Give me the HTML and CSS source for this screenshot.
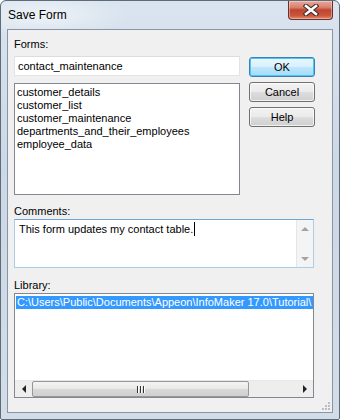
FILE: index.html
```html
<!DOCTYPE html>
<html>
<head>
<meta charset="utf-8">
<link rel="stylesheet" href="styles.css">
</head>
<body>
<div class="window">
  <div class="titlebar">
    <span class="title">Save Form</span>
    <div class="close">
      <svg width="16" height="12" viewBox="0 0 16 12">
        <path d="M3 2 L13 10 M13 2 L3 10" stroke="#3a2a28" stroke-width="4.6" stroke-linecap="square"/>
        <path d="M3 2 L13 10 M13 2 L3 10" stroke="#ffffff" stroke-width="2.6" stroke-linecap="square"/>
      </svg>
    </div>
  </div>
  <div class="client">
    <div class="label">Forms:</div>
    <div class="top">
      <div class="left">
        <div class="input">contact_maintenance</div>
        <div class="list">
          <div class="item">customer_details</div>
          <div class="item">customer_list</div>
          <div class="item">customer_maintenance</div>
          <div class="item">departments_and_their_employees</div>
          <div class="item">employee_data</div>
        </div>
      </div>
      <div class="buttons">
        <div class="btn default">OK</div>
        <div class="btn">Cancel</div>
        <div class="btn">Help</div>
      </div>
    </div>
    <div class="label comments-label">Comments:</div>
    <div class="textarea">
      <div class="text">This form updates my contact table.<span class="caret"></span></div>
      <div class="vscroll">
        <div class="vbtn"><span class="arrow-up"></span></div>
        <div class="vtrack"></div>
        <div class="vbtn"><span class="arrow-down"></span></div>
      </div>
    </div>
    <div class="label library-label">Library:</div>
    <div class="libbox">
      <div class="rows">
        <div class="row sel">C:\Users\Public\Documents\Appeon\InfoMaker 17.0\Tutorial\</div>
      </div>
      <div class="hscroll">
        <div class="hbtn"><span class="arrow-left"></span></div>
        <div class="thumb"><span class="griplines"><i></i><i></i><i></i></span></div>
        <div class="htrack"></div>
        <div class="hbtn"><span class="arrow-right"></span></div>
      </div>
    </div>
    <div class="gripwrap">
      <svg class="grip" width="10" height="10" viewBox="0 0 10 10">
        <rect x="7" y="1" width="2" height="2" fill="#b8bec6"/>
        <rect x="4" y="4" width="2" height="2" fill="#b8bec6"/>
        <rect x="7" y="4" width="2" height="2" fill="#b8bec6"/>
        <rect x="1" y="7" width="2" height="2" fill="#b8bec6"/>
        <rect x="4" y="7" width="2" height="2" fill="#b8bec6"/>
        <rect x="7" y="7" width="2" height="2" fill="#b8bec6"/>
      </svg>
    </div>
  </div>
</div>
</body>
</html>
```

FILE: styles.css
```css
* { box-sizing: border-box; }
html, body { margin: 0; padding: 0; background: #ffffff; }
body {
  font-family: "Liberation Sans", Arial, sans-serif;
  font-size: 11px;
  color: #000;
}
.window {
  width: 340px;
  height: 420px;
  border: 1px solid #5f6b78;
  border-radius: 6px 6px 2px 2px;
  padding: 0 6px 6px 6px;
  background:
    radial-gradient(ellipse 90px 22px at 40px 14px, rgba(255,255,255,0.55), rgba(255,255,255,0) 100%),
    linear-gradient(#d9e4ef, #cbd8e5 40%, #d2dde8);
  display: flex;
  flex-direction: column;
}
.titlebar {
  height: 28px;
  display: flex;
  align-items: center;
  padding-left: 1px;
}
.title {
  font-size: 12px;
  color: #000;
}
.close {
  margin-left: auto;
  margin-right: 0;
  align-self: flex-start;
  width: 45px;
  height: 19px;
  border: 1px solid #6d2f2a;
  border-top: none;
  border-radius: 0 0 4px 4px;
  background: linear-gradient(#e8a99c 0%, #d9826f 35%, #c0442f 50%, #c8553c 80%, #e08a6c 100%);
  display: flex;
  align-items: center;
  justify-content: center;
  box-shadow: inset 0 0 0 1px rgba(255,255,255,0.35);
}
.client {
  width: 326px;
  height: 384px;
  border: 1px solid #8995a2;
  background: #f0f0f0;
  padding: 7px 0 0 6px;
  display: flex;
  flex-direction: column;
}
.label {
  height: 14px;
  line-height: 14px;
}
.top {
  display: flex;
  margin-top: 5px;
}
.left {
  width: 226px;
  display: flex;
  flex-direction: column;
}
.input {
  height: 20px;
  background: #fff;
  border: 1px solid;
  border-color: #dcdcdc #e3e3e3 #e3e3e3 #e3e3e3;
  padding-left: 3px;
  line-height: 18px;
  white-space: nowrap;
}
.list {
  margin-top: 7px;
  height: 112px;
  background: #fff;
  border: 1px solid #828790;
  padding: 2px 2px;
}
.item {
  height: 13px;
  line-height: 13px;
  white-space: nowrap;
}
.buttons {
  margin-left: 9px;
  padding-top: 1px;
  width: 66px;
  display: flex;
  flex-direction: column;
  gap: 5px;
}
.btn {
  height: 20px;
  border: 1px solid #707070;
  border-radius: 3px;
  background: linear-gradient(#f2f2f2 0%, #ebebeb 48%, #dddddd 52%, #cfcfcf 100%);
  box-shadow: inset 0 0 0 1px rgba(255,255,255,0.7);
  text-align: center;
  line-height: 18px;
}
.btn.default {
  border-color: #3c7fb1;
  background: linear-gradient(#eaf6fd 0%, #d9f0fc 48%, #bee6fd 52%, #a7d9f5 100%);
  box-shadow: inset 0 0 0 1px #48c8f8;
}
.comments-label { margin-top: 9px; }
.textarea {
  margin-top: 1px;
  width: 300px;
  height: 49px;
  background: #fff;
  border: 1px solid;
  border-color: #6fa4d6 #aacde8 #aacde8 #aacde8;
  display: flex;
}
.text {
  flex: 1;
  padding: 2px 0 0 4px;
  line-height: 14px;
  white-space: nowrap;
}
.caret {
  display: inline-block;
  width: 1px;
  height: 14px;
  background: #000;
  vertical-align: top;
  margin-left: 1px;
}
.vscroll {
  width: 17px;
  background: #f4f4f4;
  border-left: 1px solid #e6e6e6;
  display: flex;
  flex-direction: column;
}
.vbtn {
  height: 17px;
  display: flex;
  align-items: center;
  justify-content: center;
}
.vtrack { flex: 1; }
.arrow-up, .arrow-down, .arrow-left, .arrow-right {
  width: 0; height: 0; display: block;
}
.arrow-up {
  border-left: 4px solid transparent;
  border-right: 4px solid transparent;
  border-bottom: 4px solid #a3a3a3;
}
.arrow-down {
  border-left: 4px solid transparent;
  border-right: 4px solid transparent;
  border-top: 4px solid #a3a3a3;
}
.library-label { margin-top: 10px; }
.libbox {
  margin-top: 1px;
  width: 300px;
  height: 105px;
  background: #fff;
  border: 1px solid #828790;
  display: flex;
  flex-direction: column;
}
.rows {
  flex: 1;
  padding: 2px 0 0 1px;
  overflow: hidden;
}
.row {
  height: 13px;
  line-height: 13px;
  padding-left: 1px;
  white-space: nowrap;
  overflow: hidden;
}
.row.sel {
  background: #3399ff;
  color: #fff;
}
.hscroll {
  height: 17px;
  display: flex;
  background: #eeeeee;
  border-top: 1px solid #e8e8e8;
}
.hbtn {
  width: 17px;
  display: flex;
  align-items: center;
  justify-content: center;
}
.arrow-left {
  border-top: 4px solid transparent;
  border-bottom: 4px solid transparent;
  border-right: 4px solid #222;
}
.arrow-right {
  border-top: 4px solid transparent;
  border-bottom: 4px solid transparent;
  border-left: 4px solid #222;
}
.thumb {
  width: 217px;
  border: 1px solid #979797;
  border-radius: 2px;
  background: linear-gradient(#f4f4f4 0%, #e8e8e8 50%, #d8d8d8 51%, #d0d0d0 100%);
  display: flex;
  align-items: center;
  justify-content: center;
}
.griplines {
  display: flex;
  gap: 2px;
}
.griplines i {
  display: block;
  width: 1px;
  height: 7px;
  background: #333;
  box-shadow: 1px 0 0 #fff;
}
.htrack { flex: 1; }
.gripwrap {
  display: flex;
  justify-content: flex-end;
  padding-top: 3px;
  padding-right: 1px;
}
.grip { display: block; }
```
